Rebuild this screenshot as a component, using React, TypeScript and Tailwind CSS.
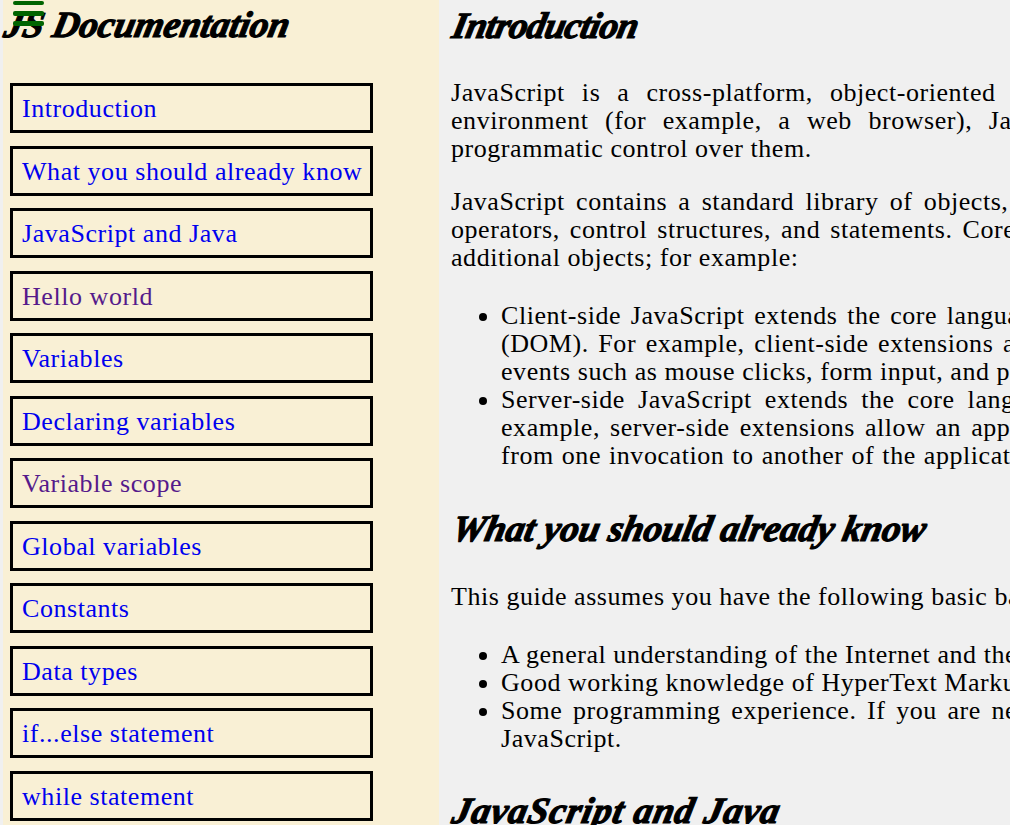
const nav: [string, boolean][] = [
  ["Introduction", false],
  ["What you should already know", false],
  ["JavaScript and Java", false],
  ["Hello world", true],
  ["Variables", false],
  ["Declaring variables", false],
  ["Variable scope", true],
  ["Global variables", false],
  ["Constants", false],
  ["Data types", false],
  ["if...else statement", false],
  ["while statement", false],
  ["Function declarations", false],
];

function Line({ text, className = "" }: { text: string; className?: string }) {
  return <div className={"whitespace-nowrap " + className}>{text}</div>;
}

function Heading({ children, className = "" }: { children: string; className?: string }) {
  return (
    <h2
      className={
        "origin-left -skew-x-12 whitespace-nowrap font-['Liberation_Serif',serif] text-[37px] leading-[42px] font-bold italic text-black [-webkit-text-stroke:1.2px_black] " +
        className
      }
    >
      {children}
    </h2>
  );
}

export default function App() {
  return (
    <div className="flex h-[825px] w-[1010px] overflow-hidden bg-[#f0f0f0] pl-[3px] font-['Liberation_Serif',serif] text-[26px] leading-[28px] tracking-[0.55px] text-black">
      <aside className="relative w-[436px] shrink-0 bg-[#f9f0d5] pl-[7px]">
        <Heading className="mt-[4px] -ml-[5px] tracking-normal">JS Documentation</Heading>
        <svg className="absolute left-[10px] top-0" width="34" height="27" viewBox="0 0 34 27">
          <rect x="0" y="1" width="31" height="4" rx="2" fill="#006400" />
          <rect x="0" y="11" width="31" height="5" rx="2" fill="#006400" />
          <rect x="0" y="21" width="31" height="5" rx="2" fill="#006400" />
        </svg>
        <nav className="mt-[37px] flex flex-col gap-[12.5px]">
          {nav.map(([label, visited]) => (
            <a
              key={label}
              href="#"
              className={
                "block h-[50px] w-[363px] shrink-0 border-[3px] border-black pl-[9px] leading-[46px] whitespace-nowrap " +
                (visited ? "text-[#551a8b]" : "text-[#0000ee]")
              }
            >
              {label}
            </a>
          ))}
        </nav>
      </aside>
      <main className="w-[1000px] shrink-0 pl-[12px]">
        <Heading className="mt-[5px] ml-[2px] tracking-[-0.7px]">Introduction</Heading>
        <div className="mt-[32px]">
          <Line className="[word-spacing:10px]" text="JavaScript is a cross-platform, object-oriented scripting language. It is a small and lightweight language. Inside a host" />
          <Line className="[word-spacing:9.5px]" text="environment (for example, a web browser), JavaScript can be connected to the objects of its environment to provide" />
          <Line text="programmatic control over them." />
        </div>
        <div className="mt-[25px]">
          <Line className="[word-spacing:4.2px]" text="JavaScript contains a standard library of objects, such as Array, Date, and Math, and a core set of language elements such as" />
          <Line className="[word-spacing:3px]" text="operators, control structures, and statements. Core JavaScript can be extended for a variety of purposes by supplementing it with" />
          <Line text="additional objects; for example:" />
        </div>
        <ul className="mt-[30px] list-disc pl-[50px]">
          <li>
            <Line className="[word-spacing:2.6px]" text="Client-side JavaScript extends the core language by supplying objects to control a browser and its Document Object Model" />
            <Line className="[word-spacing:2.5px]" text="(DOM). For example, client-side extensions allow an application to place elements on an HTML form and respond to user" />
            <Line text="events such as mouse clicks, form input, and page navigation." />
          </li>
          <li>
            <Line className="[word-spacing:6px]" text="Server-side JavaScript extends the core language by supplying objects relevant to running JavaScript on a server. For" />
            <Line className="[word-spacing:3px]" text="example, server-side extensions allow an application to communicate with a database, provide continuity of information" />
            <Line className="[word-spacing:1px]" text="from one invocation to another of the application, or perform file manipulations on a server." />
          </li>
        </ul>
        <Heading className="mt-[38px] ml-[2px] tracking-normal">What you should already know</Heading>
        <div className="mt-[33px]">
          <Line text="This guide assumes you have the following basic background:" />
        </div>
        <ul className="mt-[30px] list-disc pl-[50px]">
          <li>
            <Line text="A general understanding of the Internet and the World Wide Web (WWW)." />
          </li>
          <li>
            <Line text="Good working knowledge of HyperText Markup Language (HTML)." />
          </li>
          <li>
            <Line className="[word-spacing:3.6px]" text="Some programming experience. If you are new to programming, try one of the tutorials linked on the main page about" />
            <Line text="JavaScript." />
          </li>
        </ul>
        <Heading className="mt-[37px] ml-[2px] tracking-[0.9px]">JavaScript and Java</Heading>
      </main>
    </div>
  );
}
